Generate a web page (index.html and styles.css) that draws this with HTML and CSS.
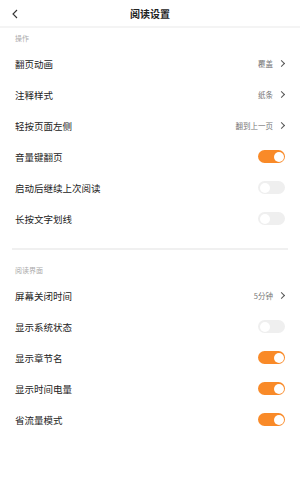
FILE: index.html
```html
<!DOCTYPE html>
<html lang="zh">
<head>
<meta charset="utf-8">
<link rel="stylesheet" href="styles.css">
</head>
<body>
<div class="page">
  <header class="topbar">
    <span class="back"><svg width="8" height="10" viewBox="0 0 8 10"><path d="M6 1 L2 5 L6 9" fill="none" stroke="#333" stroke-width="1.1"/></svg></span>
    <h1 class="title">阅读设置</h1>
  </header>
  <section class="group">
    <div class="group-label">操作</div>
    <div class="row"><span class="name">翻页动画</span><span class="value">覆盖<i class="chev"></i></span></div>
    <div class="row"><span class="name">注释样式</span><span class="value">纸条<i class="chev"></i></span></div>
    <div class="row"><span class="name">轻按页面左侧</span><span class="value">翻到上一页<i class="chev"></i></span></div>
    <div class="row"><span class="name">音量键翻页</span><span class="toggle on"></span></div>
    <div class="row"><span class="name">启动后继续上次阅读</span><span class="toggle"></span></div>
    <div class="row"><span class="name">长按文字划线</span><span class="toggle"></span></div>
  </section>
  <div class="divider"></div>
  <section class="group second">
    <div class="group-label">阅读界面</div>
    <div class="row"><span class="name">屏幕关闭时间</span><span class="value">5分钟<i class="chev"></i></span></div>
    <div class="row"><span class="name">显示系统状态</span><span class="toggle"></span></div>
    <div class="row"><span class="name">显示章节名</span><span class="toggle on"></span></div>
    <div class="row"><span class="name">显示时间电量</span><span class="toggle on"></span></div>
    <div class="row"><span class="name">省流量模式</span><span class="toggle on"></span></div>
  </section>
</div>
</body>
</html>
```
FILE: styles.css
```css
* { box-sizing: border-box; }
html, body { margin: 0; padding: 0; background: #fff; }
body {
  width: 300px;
  height: 500px;
  font-family: "Noto Sans CJK SC", "Noto Sans", sans-serif;
  color: #222;
}
.topbar {
  position: relative;
  height: 28px;
  display: flex;
  align-items: center;
  justify-content: center;
  border-bottom: 2px solid #f4f4f4;
}
.back {
  position: absolute;
  left: 11px;
  top: 9px;
  display: flex;
}
.title {
  margin: 0;
  font-size: 10px;
  font-weight: 700;
  color: #222;
}
.group { padding-top: 1px; }
.group-label {
  height: 19px;
  line-height: 19px;
  padding-left: 15px;
  font-size: 7px;
  color: #aaa;
}
.row {
  height: 31px;
  display: flex;
  align-items: center;
  justify-content: space-between;
  padding: 0 15px;
}
.name {
  font-size: 9.5px;
  color: #222;
}
.value {
  display: flex;
  align-items: center;
  font-size: 7.5px;
  color: #777;
  padding-right: 1px;
}
.chev {
  display: inline-block;
  width: 5px;
  height: 5px;
  border-top: 1px solid #555;
  border-right: 1px solid #555;
  transform: rotate(45deg);
  margin-left: 6px;
}
.toggle {
  position: relative;
  width: 27px;
  height: 13px;
  border-radius: 7px;
  background: #efefef;
}
.toggle::after {
  content: "";
  position: absolute;
  top: 1.5px;
  left: 1.5px;
  width: 10px;
  height: 10px;
  border-radius: 50%;
  background: #fff;
}
.toggle.on { background: #f98a28; }
.toggle.on::after { left: auto; right: 1.5px; }
.divider {
  margin: 14px 12px 0 12px;
  height: 2px;
  background: #f0f0f0;
}
.group.second { padding-top: 11px; }
```
